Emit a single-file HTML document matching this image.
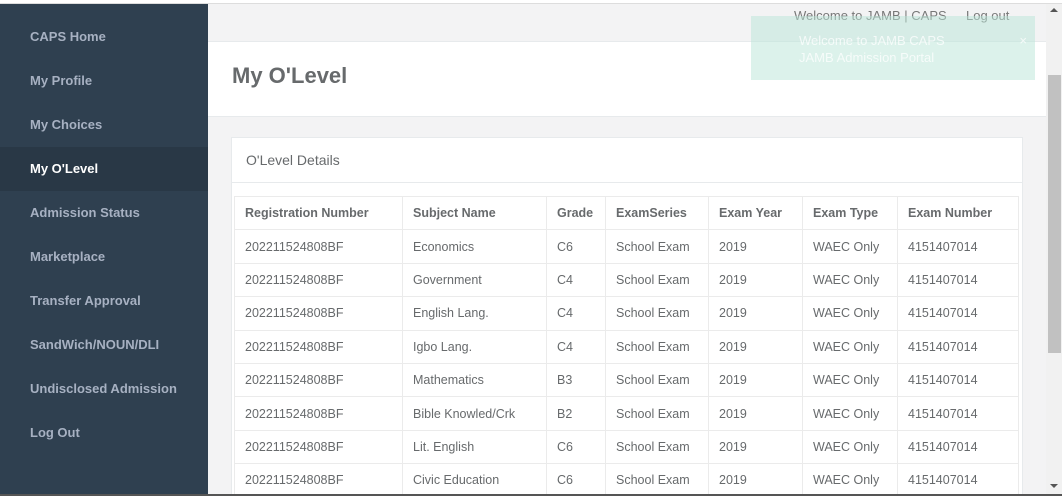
<!DOCTYPE html>
<html><head><meta charset="utf-8"><style>
*{margin:0;padding:0;box-sizing:border-box}
html,body{width:1062px;height:496px;overflow:hidden}
body{background:#f3f3f4;font-family:"Liberation Sans",sans-serif;position:relative;color:#676a6c}
.top{position:absolute;left:0;top:0;width:1062px;height:4px;background:#fff;border-bottom:1px solid #ddd}
.side{position:absolute;left:0;top:4px;width:208px;height:490px;background:#2f4050;padding-top:11px}
.side div{height:44px;line-height:44px;padding-left:30px;font-size:13px;font-weight:bold;color:#a7b1c2}
.side div.act{background:#293846;color:#fff}
.hdr{position:absolute;left:208px;top:4px;width:838px;height:38px;background:#f3f3f4;border-bottom:1px solid #e7eaec}
.wel{position:absolute;left:794px;top:8px;font-size:13px;color:#777}
.lo{position:absolute;left:966px;top:8px;font-size:13px;color:#777}
.ph{position:absolute;left:208px;top:42px;width:838px;height:75px;background:#fff;border-bottom:1px solid #e7eaec}
.ph h2{position:absolute;left:24px;top:21px;font-size:22px;font-weight:bold;color:#676a6c}
.toast{position:absolute;left:751px;top:16px;width:284px;height:64px;background:rgba(186,230,216,0.5);color:rgba(255,255,255,0.75);font-size:13px;padding:16px 0 0 48px;line-height:17px}
.toast span{position:absolute;right:8px;top:16px}
.card{position:absolute;left:231px;top:137px;width:792px;height:357px;background:#fff;border:1px solid #e7eaec;border-bottom:none;overflow:hidden}
.card .t{height:45px;line-height:44px;padding-left:14px;font-size:14px;border-bottom:1px solid #e7eaec}
table{position:absolute;left:2px;top:58px;border-collapse:collapse;font-size:12.5px}
td,th{border:1px solid #ebebeb;height:33.4px;padding:0 10px;text-align:left;white-space:nowrap;color:#676a6c}
th{font-weight:bold}
.sb{position:absolute;left:1046px;top:4px;width:16px;height:490px;background:#f1f1f1}
.th{position:absolute;left:1048px;top:75px;width:13px;height:278px;background:#c1c1c1}
.bot{position:absolute;left:0;top:494px;width:1062px;height:2px;background:#555}
</style></head><body>
<div class="top"></div>
<div class="side">
<div>CAPS Home</div><div>My Profile</div><div>My Choices</div><div class="act">My O'Level</div><div>Admission Status</div><div>Marketplace</div><div>Transfer Approval</div><div>SandWich/NOUN/DLI</div><div>Undisclosed Admission</div><div>Log Out</div>
</div>
<div class="hdr"></div>
<div class="wel">Welcome to JAMB | CAPS</div><div class="lo">Log out</div>
<div class="ph"><h2>My O'Level</h2></div>
<div class="toast">Welcome to JAMB CAPS<br>JAMB Admission Portal<span>×</span></div>
<div class="card"><div class="t">O'Level Details</div>
<table>
<colgroup><col style="width:168px"><col style="width:144px"><col style="width:59px"><col style="width:103px"><col style="width:94px"><col style="width:95px"><col style="width:121px"></colgroup>
<tr><th>Registration Number</th><th>Subject Name</th><th>Grade</th><th>ExamSeries</th><th>Exam Year</th><th>Exam Type</th><th>Exam Number</th></tr>
<tr><td>202211524808BF</td><td>Economics</td><td>C6</td><td>School Exam</td><td>2019</td><td>WAEC Only</td><td>4151407014</td></tr>
<tr><td>202211524808BF</td><td>Government</td><td>C4</td><td>School Exam</td><td>2019</td><td>WAEC Only</td><td>4151407014</td></tr>
<tr><td>202211524808BF</td><td>English Lang.</td><td>C4</td><td>School Exam</td><td>2019</td><td>WAEC Only</td><td>4151407014</td></tr>
<tr><td>202211524808BF</td><td>Igbo Lang.</td><td>C4</td><td>School Exam</td><td>2019</td><td>WAEC Only</td><td>4151407014</td></tr>
<tr><td>202211524808BF</td><td>Mathematics</td><td>B3</td><td>School Exam</td><td>2019</td><td>WAEC Only</td><td>4151407014</td></tr>
<tr><td>202211524808BF</td><td>Bible Knowled/Crk</td><td>B2</td><td>School Exam</td><td>2019</td><td>WAEC Only</td><td>4151407014</td></tr>
<tr><td>202211524808BF</td><td>Lit. English</td><td>C6</td><td>School Exam</td><td>2019</td><td>WAEC Only</td><td>4151407014</td></tr>
<tr><td>202211524808BF</td><td>Civic Education</td><td>C6</td><td>School Exam</td><td>2019</td><td>WAEC Only</td><td>4151407014</td></tr>
</table></div>
<div class="sb"></div><div class="th"></div>
<div style="position:absolute;left:1050px;top:8px;width:0;height:0;border-left:4px solid transparent;border-right:4px solid transparent;border-bottom:4px solid #555"></div>
<div style="position:absolute;left:1050px;top:484px;width:0;height:0;border-left:4px solid transparent;border-right:4px solid transparent;border-top:4px solid #555"></div>
<div class="bot"></div>
</body></html>
